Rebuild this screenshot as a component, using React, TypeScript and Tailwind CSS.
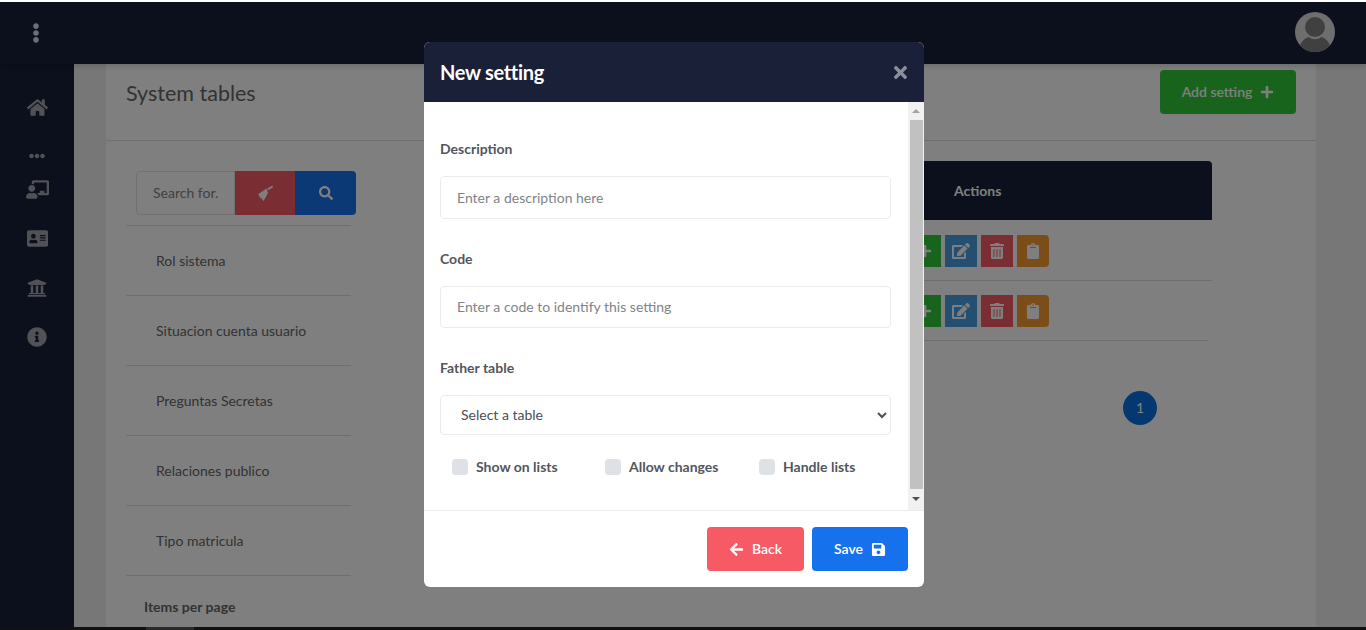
import React from 'react';
import {
  FaAddressCard,
  FaArrowLeft,
  FaChalkboardTeacher,
  FaClipboard,
  FaEdit,
  FaEllipsisH,
  FaEllipsisV,
  FaHome,
  FaInfoCircle,
  FaPlus,
  FaSave,
  FaSearch,
  FaTimes,
  FaTrashAlt,
  FaUniversity,
} from 'react-icons/fa';

const tables = ['Rol sistema', 'Situacion cuenta usuario', 'Preguntas Secretas', 'Relaciones publico', 'Tipo matricula'];

function ActionButtons() {
  return (
    <div className="ml-[469px] flex gap-1 text-white">
      <button className="flex h-8 w-8 items-center justify-center rounded-l bg-[#33c93a]">
        <FaPlus className="text-[14px]" />
      </button>
      <button className="flex h-8 w-8 items-center justify-center bg-[#4a9fe0]">
        <FaEdit className="text-[18px]" />
      </button>
      <button className="flex h-8 w-8 items-center justify-center bg-[#f55a65]">
        <FaTrashAlt className="text-[16px]" />
      </button>
      <button className="flex h-8 w-8 items-center justify-center rounded-r bg-[#f59b33]">
        <FaClipboard className="text-[16px]" />
      </button>
    </div>
  );
}

function Field({ label, placeholder, height }: { label: string; placeholder: string; height: string }) {
  return (
    <div className="mb-[30px]">
      <label className="mb-[17px] block h-5 text-sm leading-5 font-bold text-[#52565e]">{label}</label>
      <input
        placeholder={placeholder}
        className={`${height} block w-[451px] rounded border border-[#e9ecef] bg-white px-4 pb-[1px] text-sm text-[#495057] placeholder:text-[#80848a]`}
      />
    </div>
  );
}

function Check({ label, width }: { label: string; width: string }) {
  return (
    <div className={`${width} flex items-center gap-2`}>
      <span className="h-4 w-4 rounded bg-[#dee2e6]" />
      <span className="text-sm font-bold text-[#52565e]">{label}</span>
    </div>
  );
}

function Modal() {
  return (
    <div className="mt-10 flex h-[545px] w-[500px] flex-col overflow-hidden rounded-md bg-white">
      <div className="flex h-[60px] shrink-0 items-center justify-between bg-[#1a2038] pr-[14px] pl-4">
        <h2 className="text-xl font-bold tracking-[-0.3px] text-white">New setting</h2>
        <FaTimes className="text-[19px] text-[#8b8f9b]" />
      </div>
      <div className="flex h-[409px] shrink-0 border-b border-[#e9ecef]">
        <div className="flex-1 pt-[37px] pl-4">
          <Field label="Description" placeholder="Enter a description here" height="h-[43px]" />
          <Field label="Code" placeholder="Enter a code to identify this setting" height="h-[42px]" />
          <label className="mb-[17px] block h-5 text-sm leading-5 font-bold text-[#52565e]">Father table</label>
          <select className="block h-10 w-[451px] rounded border border-[#e9ecef] bg-white pb-[2px] pl-4 text-sm text-[#495057]">
            <option>Select a table</option>
          </select>
          <div className="mt-[22px] flex pl-3">
            <Check label="Show on lists" width="w-[153px]" />
            <Check label="Allow changes" width="w-[154px]" />
            <Check label="Handle lists" width="w-[130px]" />
          </div>
        </div>
        {/* scrollbar */}
        <div className="flex w-4 shrink-0 flex-col items-center bg-[#f1f1f1]">
          <div className="flex h-[18px] items-center justify-center">
            <span className="h-0 w-0 border-x-[4px] border-b-[4px] border-x-transparent border-b-[#a3a3a3]" />
          </div>
          <div className="h-[369px] w-[13px] bg-[#c1c1c1]" />
          <div className="flex h-[20px] items-center justify-center">
            <span className="h-0 w-0 border-x-[4px] border-t-[4px] border-x-transparent border-t-[#505050]" />
          </div>
        </div>
      </div>
      <div className="flex flex-1 justify-end gap-2 pt-4 pr-4">
        <button className="flex h-11 w-[97px] items-center justify-center gap-2 rounded-sm bg-[#f55a65] text-sm font-semibold text-white">
          <FaArrowLeft className="text-[15px]" /> Back
        </button>
        <button className="flex h-11 w-[96px] items-center justify-center gap-2 rounded-sm bg-[#1672ec] text-sm font-semibold text-white">
          Save <FaSave className="text-[15px]" />
        </button>
      </div>
    </div>
  );
}

export default function App() {
  return (
    <div className="flex h-[630px] w-[1366px] flex-col overflow-hidden bg-white font-['Lato',sans-serif]">
      <div className="h-[2px] shrink-0 bg-white" />
      <div className="relative flex min-h-0 flex-1 flex-col">
        {/* Navbar */}
        <div className="z-10 flex h-[62px] shrink-0 items-center justify-between bg-[#182038] pr-[31px] pl-[26px] shadow-md">
          <FaEllipsisV className="text-[20px] text-[#d5e0f0]" />
          <svg width="40" height="40" viewBox="0 0 40 40" className="mt-[-2px]">
            <clipPath id="avatar">
              <circle cx="20" cy="20" r="20" />
            </clipPath>
            <g clipPath="url(#avatar)">
              <rect width="40" height="40" fill="#dcdcdc" />
              <circle cx="20" cy="15" r="10" fill="#808080" />
              <path d="M4 40c0-10 6-14 10-15 3 3 9 3 12 0 4 1 10 5 10 15z" fill="#808080" />
            </g>
          </svg>
        </div>

        <div className="flex min-h-0 flex-1">
          {/* Sidebar */}
          <div className="flex w-[74px] shrink-0 flex-col items-center bg-[#182038] text-[20px] text-[#a0a4ac]">
            <FaHome className="mt-[33px] text-[21px]" />
            <FaEllipsisH className="mt-[30px] text-[16px]" />
            <FaChalkboardTeacher className="mt-[14px] text-[23px]" />
            <FaAddressCard className="mt-[27px] text-[21px]" />
            <FaUniversity className="mt-[29px]" />
            <FaInfoCircle className="mt-[29px]" />
          </div>

          {/* Content */}
          <div className="min-w-0 flex-1 bg-[#efefef] pr-[50px] pl-8">
            <div className="h-full bg-white">
              <div className="flex h-[77px] items-start justify-between border-b border-[#dfdfdf] px-5 pt-[6px]">
                <h1 className="mt-[9px] text-[21.5px] leading-7 text-[#666]">System tables</h1>
                <button className="flex h-11 w-[136px] items-center justify-center gap-2 rounded-sm bg-[#33c93a] text-sm font-semibold text-white">
                  Add setting <FaPlus className="text-[14px]" />
                </button>
              </div>

              <div className="flex">
                <div className="ml-5 w-[225px] shrink-0">
                  <div className="mt-[30px] ml-[10px] flex h-11 w-[220px]">
                    <input
                      placeholder="Search for.."
                      className="w-[99px] rounded-l border border-[#dee2e6] pr-4 pl-4 text-sm placeholder:text-[#80848a]"
                    />
                    <button className="flex w-[60px] items-center justify-center bg-[#f55a65] text-white">
                      <svg width="16" height="16" viewBox="0 0 16 16" fill="currentColor">
                        <path d="M15.4 0.6l0.8 1.4-5 3.2-1-1.5z" />
                        <path d="M9.5 3.5L11 8 6.6 16 5 14.2 5.4 12.8 3.8 13.8 1.2 9.2z" />
                      </svg>
                    </button>
                    <button className="flex w-[61px] items-center justify-center rounded-r bg-[#1672ec] text-white">
                      <FaSearch className="text-[14px]" />
                    </button>
                  </div>
                  <div className="mt-[10px] border-t border-[#dfdfdf]">
                    {tables.map((name) => (
                      <div key={name} className="flex h-[70px] items-center border-b border-[#dfdfdf] pl-[30px] text-sm text-[#666]">
                        {name}
                      </div>
                    ))}
                  </div>
                  <p className="mt-[21px] ml-[18px] text-sm font-bold text-[#666]">Items per page</p>
                </div>

                <div className="ml-[89px] w-[772px] shrink-0 pt-5">
                  <div className="flex h-[59px] items-center rounded-t bg-[#182038] pl-[514px] text-sm font-bold text-white">
                    Actions
                  </div>
                  <div className="flex h-[61px] items-start border-b border-[#dfdfdf] pt-[15px]">
                    <ActionButtons />
                  </div>
                  <div className="mr-1 flex h-[60px] items-start border-b border-[#dfdfdf] pt-[14px]">
                    <ActionButtons />
                  </div>
                  <div className="mt-[50px] ml-[683px] flex h-[34px] w-[34px] items-center justify-center rounded-full bg-[#0a6fe0] text-sm text-white">
                    1
                  </div>
                </div>
              </div>
            </div>
          </div>
        </div>

        <div className="flex h-[3px] shrink-0 bg-[#222]">
          <div className="ml-[146px] h-full w-[48px] bg-[#555]" />
        </div>

        {/* Dialog backdrop */}
        <div className="absolute inset-0 z-20 flex justify-center bg-black/50 pr-[18px]">
          <Modal />
        </div>
      </div>
    </div>
  );
}
